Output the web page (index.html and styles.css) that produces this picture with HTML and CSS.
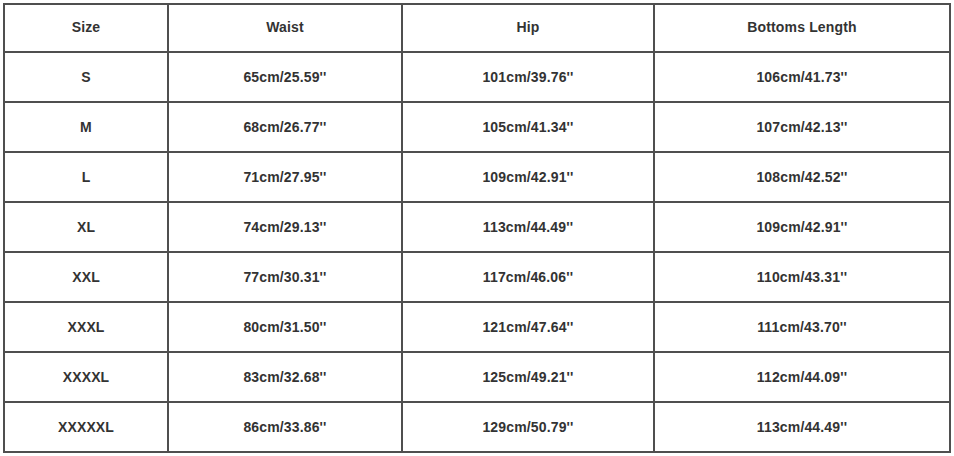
FILE: index.html
```html
<!DOCTYPE html>
<html lang="en">
<head>
<meta charset="utf-8">
<title>Size Chart</title>
<link rel="stylesheet" href="styles.css">
</head>
<body>
<div class="chart">
  <div class="cell head">Size</div><div class="cell head">Waist</div><div class="cell head">Hip</div><div class="cell head">Bottoms Length</div>
  <div class="cell">S</div><div class="cell">65cm/25.59''</div><div class="cell">101cm/39.76''</div><div class="cell">106cm/41.73''</div>
  <div class="cell">M</div><div class="cell">68cm/26.77''</div><div class="cell">105cm/41.34''</div><div class="cell">107cm/42.13''</div>
  <div class="cell">L</div><div class="cell">71cm/27.95''</div><div class="cell">109cm/42.91''</div><div class="cell">108cm/42.52''</div>
  <div class="cell">XL</div><div class="cell">74cm/29.13''</div><div class="cell">113cm/44.49''</div><div class="cell">109cm/42.91''</div>
  <div class="cell">XXL</div><div class="cell">77cm/30.31''</div><div class="cell">117cm/46.06''</div><div class="cell">110cm/43.31''</div>
  <div class="cell">XXXL</div><div class="cell">80cm/31.50''</div><div class="cell">121cm/47.64''</div><div class="cell">111cm/43.70''</div>
  <div class="cell">XXXXL</div><div class="cell">83cm/32.68''</div><div class="cell">125cm/49.21''</div><div class="cell">112cm/44.09''</div>
  <div class="cell">XXXXXL</div><div class="cell">86cm/33.86''</div><div class="cell">129cm/50.79''</div><div class="cell">113cm/44.49''</div>
</div>
</body>
</html>
```
FILE: styles.css
```css
html, body {
  background: #ffffff;
}
body {
  margin: 3px;
  font-family: "Liberation Sans", Arial, sans-serif;
  font-size: 14px;
  font-weight: 700;
  color: #333333;
}
.chart {
  display: grid;
  grid-template-columns: 164px 234px 252px 296px;
  grid-template-rows: 48px repeat(8, 50px);
  width: 948px;
  border-left: 2px solid #4f4f4f;
  border-top: 2px solid #4f4f4f;
  box-sizing: border-box;
}
.cell {
  display: flex;
  align-items: center;
  justify-content: center;
  border-right: 2px solid #4f4f4f;
  border-bottom: 2px solid #4f4f4f;
  letter-spacing: 0.15px;
}
.head {
  padding-bottom: 2px;
}
```
